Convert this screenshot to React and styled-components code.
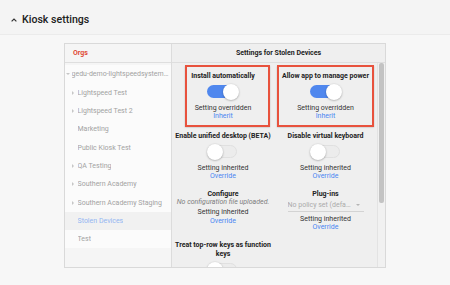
import React from 'react';
import styled, { createGlobalStyle } from 'styled-components';

const GlobalStyle = createGlobalStyle`
  html, body { margin: 0; padding: 0; }
  body {
    background: #f7f7f7;
    font-family: Roboto, "Noto Sans", "Liberation Sans", Arial, sans-serif;
    width: 450px;
    height: 285px;
    overflow: hidden;
  }
  * { box-sizing: border-box; }
`;

const Page = styled.div`
  width: 450px;
  height: 285px;
  display: flex;
  flex-direction: column;
`;

const SectionHeader = styled.div`
  height: 35px;
  padding-top: 6px;
  padding-left: 11px;
  display: flex;
  align-items: center;
  gap: 5px;
  background: #f4f4f4;
  border-bottom: 1px solid #ebebeb;
`;

const SectionTitle = styled.h2`
  margin: 0;
  font-size: 10.6px;
  font-weight: 500;
  color: #212121;
  line-height: 12px;
`;

const Panel = styled.div`
  width: 322px;
  height: 225px;
  margin: 8px 0 0 64px;
  border: 1px solid #d9d9d9;
  display: flex;
  overflow: hidden;
`;

const OrgColumn = styled.div`
  width: 107px;
  flex: none;
  background: #f5f5f5;
  border-right: 1px solid #dcdcdc;
  display: flex;
  flex-direction: column;
`;

const ColumnHeader = styled.div`
  height: 18.5px;
  flex: none;
  display: flex;
  align-items: center;
  justify-content: ${p => (p.$center ? 'center' : 'flex-start')};
  padding-left: ${p => (p.$center ? '0' : '8px')};
  border-bottom: 1px solid #dedede;
  font-size: 7px;
  font-weight: 700;
  color: ${p => p.$color || '#222'};
`;

const OrgList = styled.div`
  padding-top: 2.8px;
  display: flex;
  flex-direction: column;
`;

const OrgItem = styled.div`
  height: 18.3px;
  display: flex;
  align-items: center;
  padding-left: ${p => 0.5 + p.$depth * 6}px;
  padding-right: 2px;
  background: ${p => (p.$selected ? '#f1f1f1' : '#fbfbfb')};
  color: ${p => (p.$selected ? '#93b6f2' : '#a2a2a2')};
  font-size: 7px;
  white-space: nowrap;
  overflow: hidden;
`;

const OrgName = styled.span`
  overflow: hidden;
  text-overflow: ellipsis;
`;

const Caret = styled.span`
  width: 6px;
  flex: none;
  display: flex;
  align-items: center;
  &::before {
    content: '';
    display: ${p => (p.$dir === 'none' ? 'none' : 'block')};
    width: 0;
    height: 0;
    ${p =>
      p.$dir === 'down'
        ? 'border-top: 2.5px solid #c6c6c6; border-left: 2px solid transparent; border-right: 2px solid transparent;'
        : 'border-left: 2.5px solid #c6c6c6; border-top: 2px solid transparent; border-bottom: 2px solid transparent;'}
  }
`;

const SettingsColumn = styled.div`
  flex: 1;
  min-width: 0;
  background: #efefef;
  display: flex;
  flex-direction: column;
`;

const SettingsBody = styled.div`
  flex: 1;
  min-height: 0;
  display: flex;
`;

const SettingsGrid = styled.div`
  flex: 1;
  min-width: 0;
  display: grid;
  grid-template-columns: 1fr 1fr;
  align-content: start;
  align-items: start;
  overflow: hidden;
`;

const ScrollTrack = styled.div`
  width: 8px;
  flex: none;
  background: #f1f1f1;
  border-left: 1px solid #e3e3e3;
  display: flex;
  justify-content: center;
`;

const ScrollThumb = styled.div`
  width: 4.5px;
  height: ${p => p.$size}px;
  background: #c3c3c3;
  border-radius: 2px;
`;

const Cell = styled.div`
  display: flex;
  flex-direction: column;
  align-items: center;
  text-align: center;
  padding: ${p => p.$pt}px 3px ${p => p.$pb}px;
`;

const Highlight = styled.div`
  width: ${p => p.$w}px;
  margin-left: ${p => p.$shift || 0}px;
  border: 2px solid #e8523d;
  box-shadow: 0 0.5px 1.5px rgba(0, 0, 0, 0.25);
  padding: 4.75px ${p => p.$pr || 0}px 4.5px 0;
  display: flex;
  flex-direction: column;
  align-items: center;
`;

const SettingTitle = styled.div`
  font-size: 7px;
  line-height: 8.5px;
  font-weight: 700;
  color: #222;
  white-space: pre-line;
`;

const Status = styled.div`
  font-size: 7px;
  line-height: 8.5px;
  color: #333;
  margin-top: ${p => p.$mt || 0}px;
  white-space: nowrap;
`;

const ActionLink = styled.a`
  font-size: 7px;
  line-height: 8.5px;
  color: #4a86f2;
  text-decoration: none;
  cursor: pointer;
`;

const Note = styled.div`
  font-size: 7px;
  line-height: 8.5px;
  font-style: italic;
  color: #7d7d7d;
  white-space: nowrap;
`;

const Select = styled.div`
  width: 76px;
  height: 13.5px;
  border-bottom: 1px solid #d3d3d3;
  display: flex;
  align-items: center;
  gap: 1px;
  font-size: 7px;
  color: #ababab;
`;

const SelectText = styled.span`
  max-width: 66px;
  overflow: hidden;
  white-space: nowrap;
  text-overflow: ellipsis;
  text-align: left;
`;

const SelectArrow = styled.span`
  width: 0;
  height: 0;
  margin-left: 1px;
  border-top: 2.5px solid #b5b5b5;
  border-left: 2px solid transparent;
  border-right: 2px solid transparent;
`;

const Switch = styled.div`
  position: relative;
  width: 32px;
  height: 16px;
  flex: none;
  margin: 3.5px 0 4px;
`;

const Track = styled.div`
  position: absolute;
  left: 0;
  right: 2px;
  top: 1.5px;
  height: 13px;
  border-radius: 6.5px;
  background: ${p => (p.$on ? '#4f87ee' : '#ececec')};
  border: ${p => (p.$on ? 'none' : '1px solid #e0e0e0')};
`;

const Knob = styled.div`
  position: absolute;
  top: 0;
  left: ${p => (p.$on ? '16px' : '0')};
  width: 16px;
  height: 16px;
  border-radius: 50%;
  background: #fff;
  box-shadow: 0 0.5px 2px rgba(0, 0, 0, 0.35);
`;

const Toggle = ({ on }) => (
  <Switch>
    <Track $on={on} />
    <Knob $on={on} />
  </Switch>
);

const orgs = [
  { name: 'gedu-demo-lightspeedsystems.com', depth: 0, caret: 'down' },
  { name: 'Lightspeed Test', depth: 1, caret: 'right' },
  { name: 'Lightspeed Test 2', depth: 1, caret: 'right' },
  { name: 'Marketing', depth: 1, caret: 'none' },
  { name: 'Public Kiosk Test', depth: 1, caret: 'none' },
  { name: 'QA Testing', depth: 1, caret: 'right' },
  { name: 'Southern Academy', depth: 1, caret: 'right' },
  { name: 'Southern Academy Staging', depth: 1, caret: 'right' },
  { name: 'Stolen Devices', depth: 1, caret: 'none', selected: true },
  { name: 'Test', depth: 1, caret: 'none' },
];

const ChevronUp = () => (
  <svg width="6" height="4" viewBox="0 0 6 4" fill="none">
    <path d="M0.6 3.4 L3 1 L5.4 3.4" stroke="#333" strokeWidth="1.2" />
  </svg>
);

export default function App() {
  return (
    <Page>
      <GlobalStyle />
      <SectionHeader>
        <ChevronUp />
        <SectionTitle>Kiosk settings</SectionTitle>
      </SectionHeader>
      <Panel>
        <OrgColumn>
          <ColumnHeader $color="#df4a36">Orgs</ColumnHeader>
          <OrgList>
            {orgs.map(o => (
              <OrgItem key={o.name} $depth={o.depth} $selected={o.selected}>
                <Caret $dir={o.caret} />
                <OrgName>{o.name}</OrgName>
              </OrgItem>
            ))}
          </OrgList>
        </OrgColumn>
        <SettingsColumn>
          <ColumnHeader $center>Settings for Stolen Devices</ColumnHeader>
          <SettingsBody>
            <SettingsGrid>
              <Cell $pt={2.5} $pb={0}>
                <Highlight $w={85} $shift={9} $pr={9}>
                  <SettingTitle>Install automatically</SettingTitle>
                  <Toggle on />
                  <Status>Setting overridden</Status>
                  <ActionLink>Inherit</ActionLink>
                </Highlight>
              </Cell>
              <Cell $pt={2.5} $pb={0}>
                <Highlight $w={97}>
                  <SettingTitle>Allow app to manage power</SettingTitle>
                  <Toggle on />
                  <Status>Setting overridden</Status>
                  <ActionLink>Inherit</ActionLink>
                </Highlight>
              </Cell>

              <Cell $pt={4.25} $pb={5}>
                <SettingTitle>Enable unified desktop (BETA)</SettingTitle>
                <Toggle />
                <Status>Setting inherited</Status>
                <ActionLink>Override</ActionLink>
              </Cell>
              <Cell $pt={4.25} $pb={5}>
                <SettingTitle>Disable virtual keyboard</SettingTitle>
                <Toggle />
                <Status>Setting inherited</Status>
                <ActionLink>Override</ActionLink>
              </Cell>

              <Cell $pt={4.25} $pb={5}>
                <SettingTitle>Configure</SettingTitle>
                <Note>No configuration file uploaded.</Note>
                <Status $mt={1.5}>Setting inherited</Status>
                <ActionLink>Override</ActionLink>
              </Cell>
              <Cell $pt={4.25} $pb={5}>
                <SettingTitle>Plug-ins</SettingTitle>
                <Select>
                  <SelectText>No policy set (default)</SelectText>
                  <SelectArrow />
                </Select>
                <Status $mt={3}>Setting inherited</Status>
                <ActionLink>Override</ActionLink>
              </Cell>

              <Cell $pt={4.25} $pb={5}>
                <SettingTitle>{'Treat top-row keys as function\nkeys'}</SettingTitle>
                <Toggle />
              </Cell>
              <Cell $pt={4.25} $pb={5} />
            </SettingsGrid>
            <ScrollTrack>
              <ScrollThumb $size={140.5} />
            </ScrollTrack>
          </SettingsBody>
        </SettingsColumn>
      </Panel>
    </Page>
  );
}
